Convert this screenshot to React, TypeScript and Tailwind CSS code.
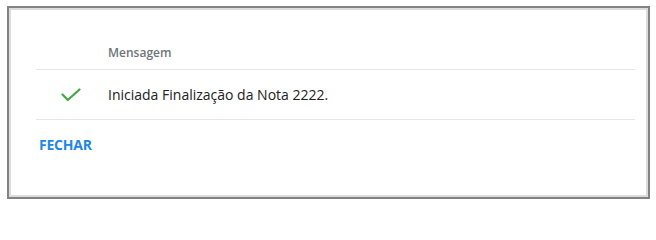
export default function App() {
  return (
    <div className="w-[656px] h-[203px] bg-white pl-[7px] pt-[6px] font-['Open_Sans',sans-serif]">
      <div className="w-[643px] h-[193px] border-2 border-[#838383]">
        <div className="h-full border-2 border-[#dcdcdc] bg-white pl-[25px] pr-[11px]">
          {/* table */}
          <div className="mt-[21px]">
            <div className="flex h-[39px] items-end border-b border-[#e6e6e6] pb-[7px]">
              <div className="w-[72px]" />
              <span className="text-[12px] font-semibold text-[#6f7479]">Mensagem</span>
            </div>
            <div className="flex h-[50px] items-center border-b border-[#e6e6e6]">
              <div className="flex w-[72px] justify-center pr-[3px]">
                <svg width="20" height="14" viewBox="0 0 20 14" fill="none">
                  <path
                    d="M1.5 6.5 6.8 12 18.5 1.5"
                    stroke="#43a843"
                    strokeWidth="2.2"
                    strokeLinecap="round"
                    strokeLinejoin="round"
                  />
                </svg>
              </div>
              <span className="text-[14px] text-[#212121]">Iniciada Finalização da Nota 2222.</span>
            </div>
          </div>
          <button className="mt-[14px] ml-[3px] text-[14px] font-bold tracking-[-0.2px] text-[#1e88e5]">
            FECHAR
          </button>
        </div>
      </div>
    </div>
  );
}
